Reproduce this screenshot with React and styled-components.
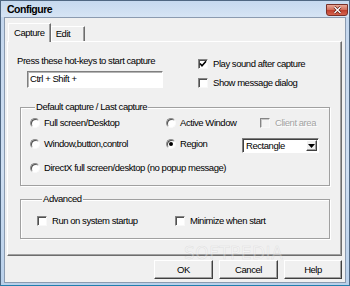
import React from "react";
import styled, { createGlobalStyle } from "styled-components";

const GlobalStyle = createGlobalStyle`
  html, body {
    margin: 0;
    padding: 0;
    background: #ffffff;
  }
  body {
    font-family: "Liberation Sans", Arial, sans-serif;
    font-size: 9.5px;
    letter-spacing: -0.45px;
    color: #000;
  }
`;

const Window = styled.div`
  position: relative;
  box-sizing: border-box;
  width: 350px;
  height: 286px;
  display: flex;
  flex-direction: column;
  border: 1px solid #4f6782;
  border-bottom-color: #1f7fae;
  background: linear-gradient(to bottom, #c3d6ed, #cfdff2 60%, #b9d0ea);
  overflow: hidden;
`;

const TitleBar = styled.div`
  height: 16px;
  display: flex;
  justify-content: space-between;
  padding: 0 1px 0 6px;
  background: linear-gradient(to bottom, #c6d9ef, #d6e4f4);
`;

const Title = styled.div`
  font-size: 10.5px;
  font-weight: bold;
  letter-spacing: -0.5px;
  line-height: 16px;
  color: #000;
`;

const CloseBtn = styled.div`
  box-sizing: border-box;
  width: 22px;
  height: 12px;
  margin-top: 3px;
  display: flex;
  align-items: center;
  justify-content: center;
  border: 1px solid #7a3028;
  border-radius: 0 0 3px 3px;
  background: linear-gradient(to bottom, #e9a998, #d4705c 45%, #c0412f 55%, #d5644f);
`;

const Client = styled.div`
  flex: 1;
  display: flex;
  flex-direction: column;
  margin: 0 3px 2px 3px;
  padding: 0 3px 3px 2px;
  border: 1px solid #8b9bb0;
  background: #f0f0f0;
`;

const TabStrip = styled.div`
  height: 23px;
  display: flex;
  align-items: flex-end;
  padding-left: 1px;
`;

const Tab = styled.div`
  position: relative;
  box-sizing: border-box;
  height: ${(p) => (p.$active ? "19px" : "15px")};
  margin-bottom: ${(p) => (p.$active ? "-1px" : "0")};
  padding: ${(p) => (p.$active ? "0 5px" : "0 4px")};
  min-width: ${(p) => (p.$active ? "41px" : "34px")};
  line-height: ${(p) => (p.$active ? "17px" : "14px")};
  border: 1px solid #fff;
  border-bottom: none;
  border-right: 1px solid #6d6d6d;
  box-shadow: inset -1px 0 0 #a0a0a0;
  background: #f0f0f0;
  z-index: ${(p) => (p.$active ? 2 : 1)};
`;

const Panel = styled.div`
  box-sizing: border-box;
  width: 335px;
  height: 215px;
  border: 1px solid #fff;
  border-right-color: #6d6d6d;
  border-bottom-color: #6d6d6d;
  box-shadow: inset -1px -1px 0 #a0a0a0;
  background: #f0f0f0;
`;

const TopSection = styled.div`
  display: flex;
  padding: 13px 0 0 9px;
`;

const LeftCol = styled.div`
  width: 181px;
`;

const Label = styled.div`
  line-height: 12px;
`;

const TextBox = styled.div`
  box-sizing: border-box;
  width: 136px;
  height: 17px;
  margin: 4px 0 0 10px;
  padding: 0 2px;
  line-height: 14px;
  background: #fff;
  border: 1px solid;
  border-color: #7f7f7f #fff #fff #7f7f7f;
  box-shadow: inset 1px 1px 0 #b5b5b5;
`;

const RightCol = styled.div`
  display: flex;
  flex-direction: column;
  gap: 4px;
  padding-top: 1px;
`;

const OptionRow = styled.label`
  display: flex;
  align-items: center;
  gap: ${(p) => (p.$gap ? p.$gap : 4)}px;
  height: 15px;
  line-height: 12px;
  white-space: nowrap;
  color: ${(p) => (p.$disabled ? "#a3a3a3" : "#000")};
  text-shadow: ${(p) => (p.$disabled ? "1px 1px 0 #fff" : "none")};
  padding-left: ${(p) => (p.$indent ? p.$indent : 0)}px;
`;

const Box = styled.span`
  position: relative;
  box-sizing: border-box;
  flex: none;
  width: 10px;
  height: 10px;
  background: ${(p) => (p.$disabled ? "#f4f4f4" : "#fff")};
  border: 1px solid;
  border-color: #858585 #f8f8f8 #f8f8f8 #858585;
  box-shadow: inset 1px 1px 0 ${(p) => (p.$disabled ? "#c8c8c8" : "#505050")};
  display: flex;
  align-items: center;
  justify-content: center;
`;

const Radio = styled.span`
  position: relative;
  box-sizing: border-box;
  flex: none;
  width: 10px;
  height: 10px;
  border-radius: 50%;
  background: #fff;
  border: 1px solid;
  border-color: #8a8a8a #fafafa #fafafa #8a8a8a;
  box-shadow: inset 1px 1px 0 #505050;

  &::after {
    content: "";
    display: ${(p) => (p.$checked ? "block" : "none")};
    position: absolute;
    left: 2px;
    top: 2px;
    width: 4px;
    height: 4px;
    border-radius: 50%;
    background: #000;
  }
`;

const Group = styled.fieldset`
  box-sizing: border-box;
  width: 310px;
  margin: ${(p) => p.$top}px 0 0 12px;
  padding: ${(p) => p.$pad};
  border: 1px solid #a0a0a0;
  box-shadow: 1px 1px 0 #fff, inset 1px 1px 0 #fff;
  min-width: 0;
`;

const Legend = styled.legend`
  margin-left: 5px;
  padding: 0 1px;
  line-height: 12px;
  background: #f0f0f0;
`;

const OptionGrid = styled.div`
  display: grid;
  grid-template-columns: 136px 76px 1fr;
  row-gap: ${(p) => p.$rowGap || 0}px;
  align-items: center;
`;

const Wide = styled.div`
  grid-column: 1 / span 3;
  margin-top: 2px;
`;

const Select = styled.div`
  box-sizing: border-box;
  width: 77px;
  height: 15px;
  margin-top: 3px;
  display: flex;
  align-items: center;
  justify-content: space-between;
  padding: 0 1px 0 3px;
  background: #fff;
  border: 1px solid;
  border-color: #7f7f7f #fff #fff #7f7f7f;
  box-shadow: inset 1px 1px 0 #404040;
`;

const DropBtn = styled.span`
  box-sizing: border-box;
  width: 11px;
  height: 11px;
  display: flex;
  align-items: center;
  justify-content: center;
  background: #f0f0f0;
  border: 1px solid;
  border-color: #fff #404040 #404040 #fff;
  box-shadow: inset -1px -1px 0 #a0a0a0;
`;

const AdvancedRow = styled.div`
  display: grid;
  grid-template-columns: 138px 1fr;
  align-items: center;
`;

const ButtonRow = styled.div`
  display: flex;
  justify-content: flex-end;
  gap: 6px;
  margin-top: 4px;
`;

const Button = styled.div`
  box-sizing: border-box;
  width: ${(p) => p.$w}px;
  height: 19px;
  display: flex;
  align-items: center;
  justify-content: center;
  background: #f0f0f0;
  border: 1px solid;
  border-color: #fff #404040 #404040 #fff;
  box-shadow: inset -1px -1px 0 #a0a0a0;
`;

const Watermark = styled.div`
  position: absolute;
  left: 183px;
  top: 242px;
  font-family: "DejaVu Sans", sans-serif;
  font-size: 17px;
  letter-spacing: 0.5px;
  color: rgba(255, 255, 255, 0.3);
  -webkit-text-stroke: 0.5px rgba(175, 175, 175, 0.3);
  pointer-events: none;
`;

const CheckMark = () => (
  <svg width="8" height="8" viewBox="0 0 8 8">
    <path d="M1 3.5 L3 5.8 L7 1.2" fill="none" stroke="#000" strokeWidth="1.6" />
  </svg>
);

const CloseIcon = () => (
  <svg width="9" height="8" viewBox="0 0 9 8">
    <path d="M1.5 1 L7.5 7 M7.5 1 L1.5 7" stroke="#5a1a12" strokeWidth="2.6" />
    <path d="M1.5 1 L7.5 7 M7.5 1 L1.5 7" stroke="#fff" strokeWidth="1.4" />
  </svg>
);

const Arrow = () => (
  <svg width="7" height="4" viewBox="0 0 7 4">
    <path d="M0 0 H7 L3.5 4 Z" fill="#000" />
  </svg>
);

const Check = ({ checked, disabled, children, indent }) => (
  <OptionRow $gap={5} $disabled={disabled} $indent={indent}>
    <Box $disabled={disabled}>{checked && <CheckMark />}</Box>
    <span>{children}</span>
  </OptionRow>
);

const RadioOption = ({ checked, children }) => (
  <OptionRow $gap={4}>
    <Radio $checked={checked} />
    <span>{children}</span>
  </OptionRow>
);

export default function App() {
  return (
    <>
      <GlobalStyle />
      <Window>
        <TitleBar>
          <Title>Configure</Title>
          <CloseBtn>
            <CloseIcon />
          </CloseBtn>
        </TitleBar>
        <Client>
          <TabStrip>
            <Tab $active>Capture</Tab>
            <Tab>Edit</Tab>
          </TabStrip>
          <Panel>
            <TopSection>
              <LeftCol>
                <Label>Press these hot-keys to start capture</Label>
                <TextBox>Ctrl + Shift +</TextBox>
              </LeftCol>
              <RightCol>
                <Check checked>Play sound after capture</Check>
                <Check>Show message dialog</Check>
              </RightCol>
            </TopSection>

            <Group $top={11} $pad="2px 0 10px 9px">
              <Legend>Default capture / Last capture</Legend>
              <OptionGrid $rowGap={5}>
                <RadioOption>Full screen/Desktop</RadioOption>
                <RadioOption>Active Window</RadioOption>
                <Check disabled indent={18}>Client area</Check>
                <RadioOption>Window,button,control</RadioOption>
                <RadioOption checked>Region</RadioOption>
                <Select>
                  <span>Rectangle</span>
                  <DropBtn>
                    <Arrow />
                  </DropBtn>
                </Select>
                <Wide>
                  <RadioOption>DirectX full screen/desktop (no popup message)</RadioOption>
                </Wide>
              </OptionGrid>
            </Group>

            <Group $top={7} $pad="8px 0 10px 16px">
              <Legend>Advanced</Legend>
              <AdvancedRow>
                <Check>Run on system startup</Check>
                <Check>Minimize when start</Check>
              </AdvancedRow>
            </Group>
          </Panel>
          <ButtonRow>
            <Button $w={59}>OK</Button>
            <Button $w={59}>Cancel</Button>
            <Button $w={58}>Help</Button>
          </ButtonRow>
        </Client>
        <Watermark>SOFTPEDIA</Watermark>
      </Window>
    </>
  );
}
